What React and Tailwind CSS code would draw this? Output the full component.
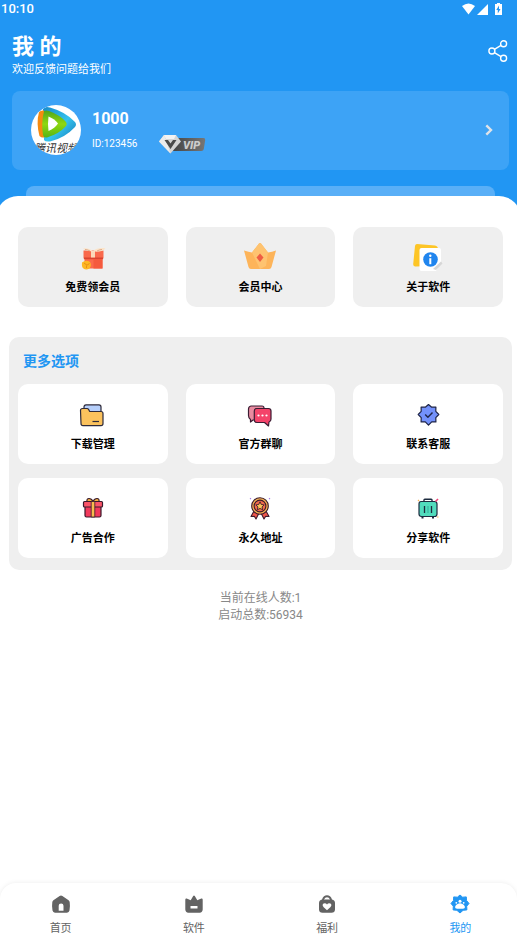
import { useState } from 'react'

const StatusIcons = () => (
  <svg width="42" height="14" viewBox="0 0 42 14" fill="#fff" aria-hidden="true">
    <path d="M1 4Q7.500-1 14 4L7.500 12.500Z" />
    <path d="M27 2v11H16Z" />
    <path
      fillRule="evenodd"
      d="M34 2h2V1h3v1h2v11h-7Z M38 3.500L35.300 8h1.500V11.500L39.500 7H38Z"
    />
  </svg>
)

const ShareIcon = () => (
  <svg width="20" height="22" viewBox="0 0 20 22" fill="none" stroke="#fff" strokeWidth="1.4">
    <circle cx="15.6" cy="3.8" r="3" />
    <circle cx="3.9" cy="11" r="3" />
    <circle cx="15.6" cy="18.2" r="3" />
    <path d="M6.4 9.4l6.6-4M6.4 12.6l6.6 4" />
  </svg>
)

const Avatar = () => (
  <svg width="50" height="50" viewBox="0 0 50 50" aria-label="avatar">
    <defs>
      <clipPath id="avatarClip">
        <circle cx="25" cy="25" r="25" />
      </clipPath>
      <linearGradient id="avatarBlue" x1="0" y1="0" x2="1" y2="1">
        <stop offset="0" stopColor="#1689c9" />
        <stop offset="0.55" stopColor="#35c3ee" />
        <stop offset="1" stopColor="#1379b8" />
      </linearGradient>
      <linearGradient id="avatarGreen" x1="0" y1="0" x2="0" y2="1">
        <stop offset="0" stopColor="#4fa51d" />
        <stop offset="0.5" stopColor="#8fd80f" />
        <stop offset="1" stopColor="#56b414" />
      </linearGradient>
    </defs>
    <g clipPath="url(#avatarClip)">
      <rect width="50" height="50" fill="#fff" />
      <path d="M12 4Q14 1 19 2.500Q35 7 44 17Q46 19.500 44 22Q34 33 19 36.500Q14 37 13 35Z" fill="url(#avatarBlue)" />
      <path d="M8 7Q10 5 13 5.500L14 32Q11 33.500 8.500 31Q5 18 8 7Z" fill="#f58a10" />
      <path d="M13 6Q15 5 18 6Q29 10 35 17Q36.500 19 35 21Q28 29 16 32.500Q12.500 33 12 30Q10 18 13 6Z" fill="url(#avatarGreen)" />
      <path d="M17.500 11.500Q24 14 27 18.500Q24 23 17.500 26Q16.500 19 17.500 11.500Z" fill="#fff" />
      <text
        x="25"
        y="47"
        textAnchor="middle"
        fontSize="11"
        fill="#333"
        fontStyle="italic"
        fontFamily='"Noto Sans CJK SC", sans-serif'
      >
        腾讯视频
      </text>
    </g>
  </svg>
)

const VipBadge = () => (
  <svg width="48" height="20" viewBox="0 0 48 20" aria-hidden="true">
    <defs>
      <linearGradient id="vipBar" x1="0" y1="0" x2="1" y2="0">
        <stop offset="0" stopColor="#444" />
        <stop offset="1" stopColor="#777" />
      </linearGradient>
    </defs>
    <path d="M15 4h29.500q2 0 1.700 2l-1.400 9q-.4 2-2.400 2H14Z" fill="url(#vipBar)" />
    <path d="M5 1h12l5 6.500L11.500 19.500L0 7.500Z" fill="#d5d5d5" />
    <path d="M5 1h12l-2 4H7Z" fill="#f3f3f3" />
    <path d="M0 7.500L5 1l2 5l4.500 13.500Z" fill="#ececec" />
    <path d="M5.500 6H9l2.500 3.500L14 6h3.500L11.500 15Z" fill="#4a4a4a" />
    <text
      x="24"
      y="14.500"
      fontSize="11"
      fontWeight="900"
      fontStyle="italic"
      fill="#ccc"
      fontFamily="Roboto, sans-serif"
    >
      VIP
    </text>
  </svg>
)

const FreeGift = () => (
  <svg width="32" height="32" viewBox="0 0 32 32" aria-hidden="true">
    <path d="M6.500 8.500h20v8h-20Z" fill="#f9694c" />
    <path d="M7.500 16h18v10.500h-18Z" fill="#fb6b4d" />
    <path d="M7 15.500h19v1.700h-19Z" fill="#d9442f" />
    <path d="M16.500 17h9v9.500h-9Z" fill="#f55a3e" />
    <path d="M14 9h4v6.500h-4Z" fill="#fbd9b8" />
    <path d="M15 9.500C11 9 8 8.500 6 6.500C10 5.500 13 7 16 9C19 6.500 24 5.500 28.500 6.500C26 9.500 21 10 17 9.500Z" fill="#fbe3c8" />
    <path d="M8 7.500q3 .2 5 1.500M25 7.500q-3 .2-5 1.500" stroke="#d59a78" strokeWidth="0.8" fill="none" />
    <path d="M5 20.500q4-3 8-.5q2 3-.5 6.500q-3.500 2-6 0q-2-1-1.500-6Z" fill="#fdb726" />
    <path d="M7 21l3 2.200l2.500-1.700M9.500 23.500v2.500" stroke="#e98a12" strokeWidth="0.900" fill="none" />
  </svg>
)

const MemberCrown = () => (
  <svg width="32" height="32" viewBox="0 0 32 32" aria-hidden="true">
    <path d="M0 8.500Q5 10 8 10.500L15 1.500Q16 .5 17 1.500L24 10.500Q28 10 32 8.500L27.500 25Q27 27 25 27H7Q5 27 4.500 25Z" fill="#fdb45a" />
    <path d="M15 1.500Q16 .5 17 1.500L24 10.500L22 24L16 27L8 10.500Z" fill="#fec370" />
    <path d="M16 11.500l3.500 4l-3.500 4.500l-3.500-4.500Z" fill="#ef5d42" />
  </svg>
)

const AboutInfo = () => (
  <svg width="32" height="32" viewBox="0 0 32 32" aria-hidden="true">
    <path d="M5 2L23 3.500Q26 4 26 7V24L3 24.500Q1 24 1.200 22L3 4Q3.300 2 5 2Z" fill="#fdc526" />
    <path d="M7.500 8Q7.500 6 9.500 6H27Q29 6 29 8V20L24 29H9.500Q7.500 29 7.500 27Z" fill="#fff" />
    <path d="M21 27l8-7.500l1.500 2l-6.500 6.500Z" fill="#d6d6d6" />
    <circle cx="18.500" cy="17.500" r="7.300" fill="#2085ee" />
    <path d="M17.300 16.200h2v6h-2Z" fill="#fff" />
    <circle cx="18.300" cy="13.700" r="1.200" fill="#fff" />
  </svg>
)

const Folder = () => (
  <svg width="32" height="32" viewBox="0 0 32 32" stroke="#2e2a3a" strokeWidth="1.200" strokeLinejoin="round" aria-hidden="true">
    <path d="M7 8Q7 5.800 9 5.800H22Q24 5.800 24 8V15H7Z" fill="#b6cffb" />
    <path d="M3.500 11.500Q3.500 9.500 5.500 9.500H10Q11 9.500 11.500 10.300L12.700 12.500H24Q26 12.500 26 14.500V24.500Q26 26.700 24 26.700H6Q4 26.700 4 24.500Z" fill="#fbc25d" />
    <path d="M15.500 22.500h6.500" fill="none" />
  </svg>
)

const Chat = () => (
  <svg width="32" height="32" viewBox="0 0 32 32" stroke="#3b1d33" strokeWidth="1.200" strokeLinejoin="round" aria-hidden="true">
    <path d="M7 7H18Q20 7 20 9V19Q20 21 18 21H9L6.500 23V20.500Q4.500 19 4.500 16.500V10Q4.500 7.500 7 7Z" fill="#e98ba0" />
    <path d="M12.500 9.500H24.500Q27 9.500 27 12V20Q27 22.500 25 23L24.500 27L20.500 23.500H13Q10.300 23.500 10.300 21V12Q10.300 9.500 12.500 9.500Z" fill="#f4436a" />
    <g fill="#fff" stroke="none">
      <circle cx="14.500" cy="16.500" r="1.100" />
      <circle cx="18.500" cy="16.500" r="1.100" />
      <circle cx="22.500" cy="16.500" r="1.100" />
    </g>
  </svg>
)

const Verified = () => (
  <svg width="32" height="32" viewBox="0 0 32 32" stroke="#1f2547" strokeWidth="1.200" strokeLinejoin="round" aria-hidden="true">
    <path
      d="M16.500 5.500L19.700 8.200L23.900 8.100L23.800 12.300L26.800 15.500L23.800 18.700L23.900 22.900L19.700 22.900L16.500 26.200L13.300 22.900L9.100 22.900L9.200 18.700L6.200 15.500L9.200 12.300L9.100 8.100L13.300 8.200Z"
      fill="#7391fb"
    />
    <path d="M13.200 15.500l2.700 2.800l4.600-4.800" fill="none" strokeWidth="1.400" />
  </svg>
)

const Gift = () => (
  <svg width="32" height="32" viewBox="0 0 32 32" stroke="#3a1a2c" strokeWidth="1.200" strokeLinejoin="round" aria-hidden="true">
    <path d="M10 8.500Q9.500 5.500 12 5.500Q14.500 5.500 16 8.500Q17.500 5.500 20 5.500Q22.500 5.500 22 8.500Z" fill="#f7b53f" />
    <path d="M8 13.500h16v9Q24 24 22.500 24h-13Q8 24 8 22.500Z" fill="#f2395b" />
    <path d="M7.500 8.500h17Q25.500 8.500 25.500 9.500v3.500Q25.500 14 24.500 14h-17Q6.500 14 6.500 13V9.500Q6.500 8.500 7.500 8.500Z" fill="#fb5468" />
    <path d="M14.200 8.500h3.600V24h-3.600Z" fill="#f9bd4e" strokeWidth="0.800" />
  </svg>
)

const Medal = () => (
  <svg width="32" height="32" viewBox="0 0 32 32" stroke="#3a1a2c" strokeWidth="1.100" strokeLinejoin="round" aria-hidden="true">
    <path d="M10 18L7 23.500L10.300 23.300L12 26L15 20Z" fill="#f2574c" />
    <path d="M22 18L25 23.500L21.700 23.300L20 26L17 20Z" fill="#f2574c" />
    <circle cx="16" cy="13" r="8.300" fill="#f5b252" />
    <circle cx="16" cy="13" r="5.900" fill="#f36a4d" />
    <path d="M16 8.800l1.300 2.700l2.900.4l-2.100 2l.5 2.900L16 15.400l-2.600 1.400l.5-2.900l-2.100-2l2.900-.4Z" fill="#fbc456" strokeWidth="0.900" />
    <path d="M25 6l1-.8M7 6l-1-.8" stroke="#a879e6" />
  </svg>
)

const Suitcase = () => (
  <svg width="32" height="32" viewBox="0 0 32 32" stroke="#1d2b3f" strokeWidth="1.200" strokeLinejoin="round" aria-hidden="true">
    <path d="M12 9V7Q12 6.200 12.800 6.200h6.400Q20 6.200 20 7V9" fill="none" strokeWidth="1.400" />
    <path d="M10.500 23.500V25.500M21 23.500V25.500" strokeWidth="2" />
    <path d="M9 8.500H22.500Q25 8.500 25 11V21Q25 23.500 22.500 23.500H9.500Q7 23.500 7 21V11Q7 8.500 9 8.500Z" fill="#51dcbd" />
    <path d="M12.500 13v7M19.500 13v7" strokeWidth="1.300" />
    <path d="M16 13v7" stroke="#2fae98" strokeWidth="1" />
    <path d="M23.500 8.500l2.500-2.500" stroke="#ee4475" strokeWidth="1.600" />
    <path d="M7 8l-1-1M25 24h1.500" stroke="#f5b252" />
  </svg>
)

const HomeIcon = () => (
  <svg width="20" height="20" viewBox="0 0 20 20" fill="currentColor" aria-hidden="true">
    <path
      fillRule="evenodd"
      d="M8.600 2Q10 1 11.400 2L17.600 6.200Q18.700 7 18.700 8.300Q19.300 12 18.500 16.500Q18 18.600 16 18.700H4Q2 18.600 1.500 16.500Q.7 12 1.300 8.300Q1.300 7 2.400 6.200Z M7.700 16.800h4.800v-5Q12.500 9.600 10.100 9.600T7.700 11.800Z"
    />
  </svg>
)

const CrownIcon = () => (
  <svg width="20" height="20" viewBox="0 0 20 20" fill="currentColor" aria-hidden="true">
    <path
      fillRule="evenodd"
      d="M9.200 2Q10 1 10.800 2L13.300 6.300L17.300 4.500Q18.700 4.200 18.700 5.700V15.500Q18.500 18.500 15.700 18.700H4.300Q1.500 18.500 1.300 15.500V5.700Q1.300 4.200 2.700 4.500L6.700 6.300Z M6.500 12v2.400h7V12Z"
    />
  </svg>
)

const BagIcon = () => (
  <svg width="20" height="20" viewBox="0 0 20 20" fill="currentColor" aria-hidden="true">
    <path
      fillRule="evenodd"
      d="M5 5.500Q6.500 1.300 10 1.300T15 5.500Q18 6 18 9V15.500Q17.800 18.700 14.500 18.700H5.500Q2.200 18.700 2 15.500V9Q2 6 5 5.500Z M7 5.500H13Q12 3.200 10 3.200T7 5.500Z M10 16.200Q5.600 12.800 5.600 11Q5.600 9.200 7.700 9.200Q9.200 9.200 10 10.500Q10.800 9.200 12.300 9.200Q14.400 9.200 14.400 11Q14.400 12.800 10 16.200Z"
    />
  </svg>
)

const MineIcon = () => (
  <svg width="20" height="20" viewBox="0 0 20 20" fill="currentColor" aria-hidden="true">
    <path d="M10 1l2.600 2.200l3.700-.3l.2 3.500L19 9.500l-2.300 2.700l.2 3.700l-3.800.4L10 19l-3.100-2.700l-3.800-.4l.2-3.700L1 9.500l2.500-3.100l.2-3.500l3.700.3Z" stroke="currentColor" strokeLinejoin="round" />
    <path d="M5 13Q5.500 10.800 8 9.800Q10 8.800 12 9.800Q14.500 10.800 15 13Q15 15 12.500 14.800H7.500Q5 15 5 13Z" fill="#fff" />
    <circle cx="10" cy="7.300" r="1.500" fill="#fff" />
    <circle cx="6.300" cy="8.800" r="0.900" fill="#fff" />
    <circle cx="13.700" cy="8.800" r="0.900" fill="#fff" />
  </svg>
)

const shortcuts = [
  { label: '免费领会员', icon: FreeGift },
  { label: '会员中心', icon: MemberCrown },
  { label: '关于软件', icon: AboutInfo },
]

const options = [
  { label: '下载管理', icon: Folder },
  { label: '官方群聊', icon: Chat },
  { label: '联系客服', icon: Verified },
  { label: '广告合作', icon: Gift },
  { label: '永久地址', icon: Medal },
  { label: '分享软件', icon: Suitcase },
]

const tabs = [
  { label: '首页', icon: HomeIcon },
  { label: '软件', icon: CrownIcon },
  { label: '福利', icon: BagIcon },
  { label: '我的', icon: MineIcon },
]

const Tile = ({ label, icon: Icon, className }) => (
  <button className={`flex h-20 flex-col items-center gap-[6px] rounded-[10px] pt-[15px] ${className}`}>
    <Icon />
    <span className="text-[11px] leading-4 font-bold text-black">{label}</span>
  </button>
)

const App = () => {
  const [active, setActive] = useState('我的')

  return (
    <div className="flex min-h-screen flex-col overflow-hidden bg-[#2196f3] font-[Roboto,'Noto_Sans_CJK_SC',sans-serif]">
      <div className="flex h-[18px] items-center justify-between pr-[14px] pl-px text-[13px] font-medium text-white">
        <span>10:10</span>
        <StatusIcons />
      </div>

      <header className="flex items-center justify-between pt-[15px] pr-[9px] pl-3 text-white">
        <div>
          <h1 className="text-[22px] leading-7 font-bold">我 的</h1>
          <p className="text-[11px] leading-[18px]">欢迎反馈问题给我们</p>
        </div>
        <button aria-label="分享" className="pb-[10px]">
          <ShareIcon />
        </button>
      </header>

      <a href="#profile" className="mt-3 mr-2 ml-3 flex h-[79px] items-center rounded-lg bg-[#3da3f6] pr-4 pb-px pl-[19px] text-white">
        <Avatar />
        <div className="ml-[11px] flex flex-col gap-2">
          <span className="text-[16px] leading-5 font-bold">1000</span>
          <div className="flex h-[14px] items-center gap-[22px]">
            <span className="text-[10px] leading-[14px]">ID:123456</span>
            <VipBadge />
          </div>
        </div>
        <svg width="8" height="12" viewBox="0 0 8 12" fill="none" stroke="#dfe3e8" strokeWidth="2.400" className="ml-auto" aria-hidden="true">
          <path d="M1.300 1.300L6 6L1.300 10.700" />
        </svg>
      </a>
      <div className="mt-4 mr-[22px] ml-[26px] h-[10px] rounded-t-lg bg-[#59aff7]"></div>

      <main className="-mx-1 flex-1 rounded-t-[22px] bg-white pt-[31px] pr-[9px] pb-6 pl-[13px]">
        <div className="grid grid-cols-3 gap-[18px] px-[9px]">
          {shortcuts.map((item) => (
            <Tile key={item.label} {...item} className="bg-[#efefef]" />
          ))}
        </div>

        <section className="mt-[30px] rounded-[10px] bg-[#efefef] px-[9px] pb-3">
          <h2 className="flex h-[47px] items-center pt-[2px] pl-[5px] text-[14px] font-bold text-[#2196f3]">更多选项</h2>
          <div className="grid grid-cols-3 gap-x-[18px] gap-y-[14px]">
            {options.map((item) => (
              <Tile key={item.label} {...item} className="bg-white" />
            ))}
          </div>
        </section>

        <div className="mt-5 text-center text-[12px] leading-[17px] text-[#888]">
          <p>当前在线人数:1</p>
          <p>启动总数:56934</p>
        </div>
      </main>

      <div className="bg-white">
        <nav className="rounded-t-2xl bg-white shadow-[0_0_5px_rgba(0,0,0,0.08)]">
          <div className="-mr-[10px] -ml-[6px] grid grid-cols-4">
            {tabs.map(({ label, icon: Icon }) => (
              <button
                key={label}
                onClick={() => setActive(label)}
                className={`flex flex-col items-center gap-[7px] pt-[11px] pb-1 ${active === label ? 'text-[#2196f3]' : 'text-[#636363]'}`}
              >
                <Icon />
                <span className="text-[11px] leading-4">{label}</span>
              </button>
            ))}
          </div>
        </nav>
      </div>
    </div>
  )
}

export default App
